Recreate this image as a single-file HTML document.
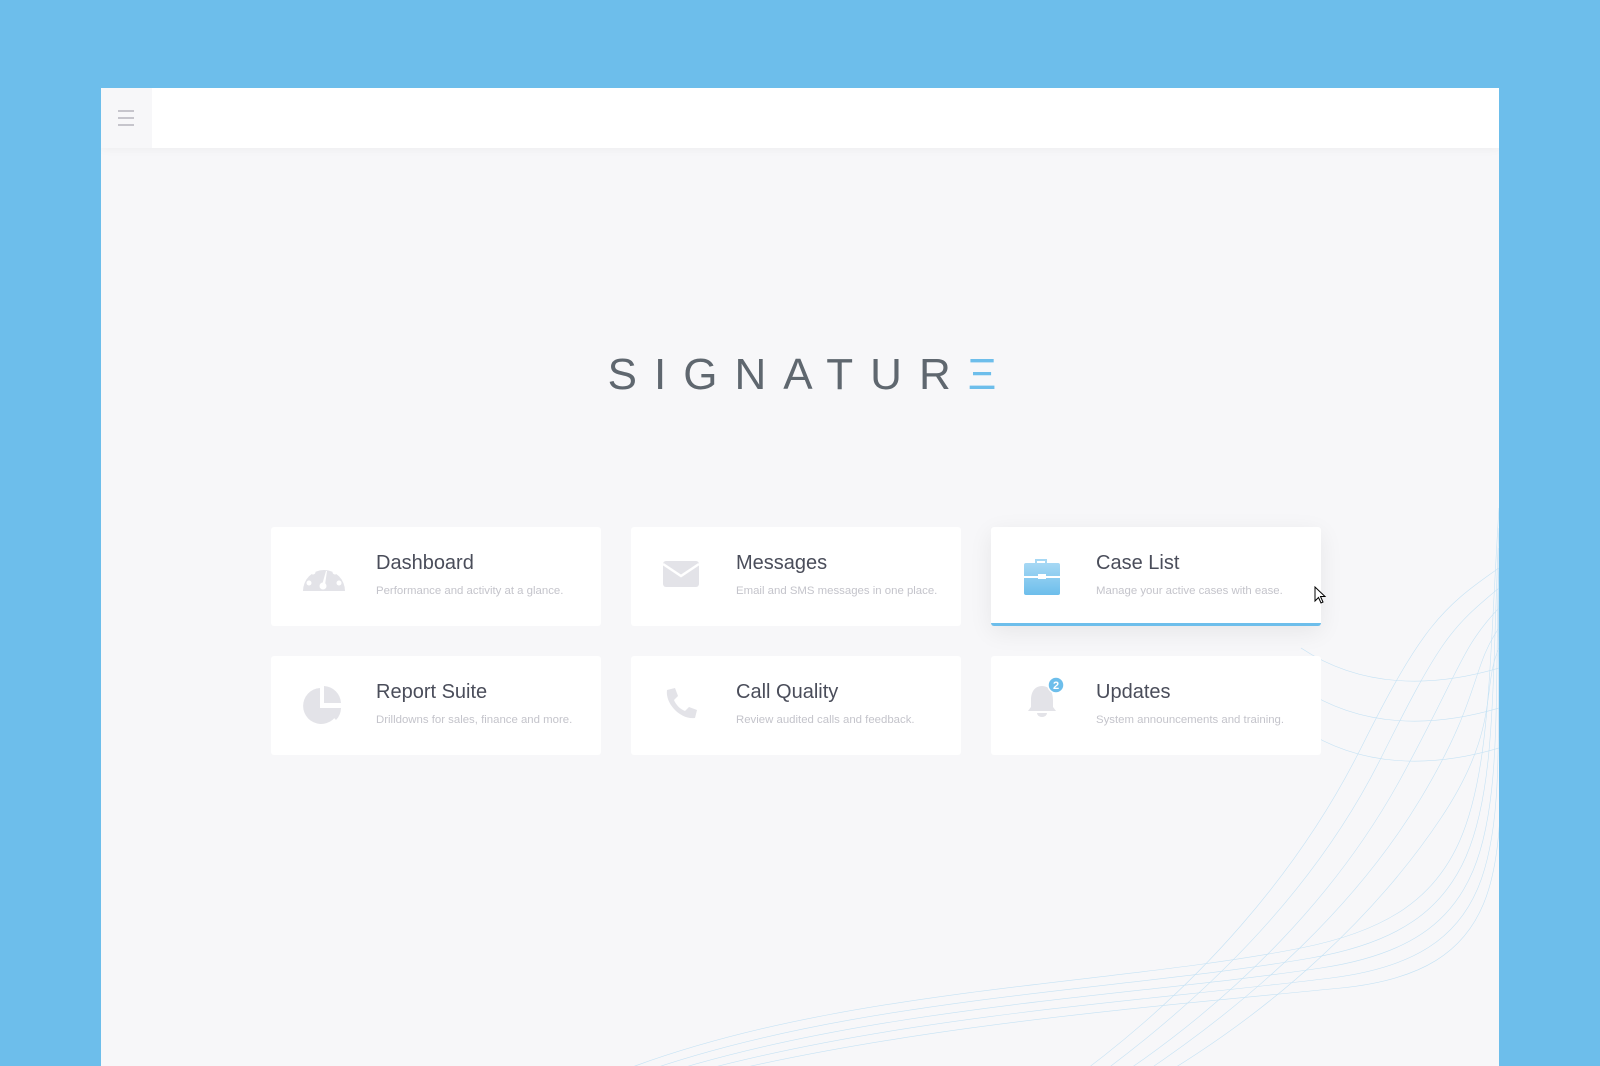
<!DOCTYPE html>
<html><head><meta charset="utf-8"><style>
*{margin:0;padding:0;box-sizing:border-box}
html,body{width:1600px;height:1066px;overflow:hidden}
body{background:#6dbeeb;font-family:"Liberation Sans",sans-serif;position:relative}
.win{position:absolute;left:101px;top:88px;width:1398px;height:1000px;background:#f7f7f9;overflow:hidden}
.hdr{position:absolute;left:0;top:0;width:100%;height:60px;background:#fff;box-shadow:0 2px 8px rgba(0,0,0,.04)}
.side{position:absolute;left:0;top:0;width:51px;height:60px;background:#f7f7f9}
.hb{position:absolute;left:17px;width:16px;height:2px;background:#c6c5cc}
.logo{position:absolute;left:0;width:100%;top:262px;text-align:center;font-size:44px;letter-spacing:17px;color:#5f676f;padding-left:21px}
.card{position:absolute;width:330px;height:99px;background:#fff;border-radius:3px}
.card .t{position:absolute;left:105px;top:25px;font-size:20px;color:#4a4d5a}
.card .s{position:absolute;left:105px;top:58px;font-size:11.4px;color:#c4c4cb}
.card svg{position:absolute;left:30px;top:28px}
.act{box-shadow:0 6px 24px rgba(0,0,0,.07);border-bottom:3px solid #6dbeeb}
</style></head><body>
<div class="win">
<svg style="position:absolute;left:0;top:0" width="1398" height="1000">
<g fill="none" stroke="#b9ddf3" stroke-width="0.6" opacity="0.8">
<path d="M480 1000 C700 900 1000 900 1200 860 S1380 700 1398 420"/>
<path d="M500 1000 C720 910 1010 905 1210 870 S1385 710 1398 440"/>
<path d="M520 1000 C740 920 1020 910 1220 880 S1390 720 1398 460"/>
<path d="M540 1000 C760 930 1030 915 1230 890 S1392 730 1398 480"/>
<path d="M560 1000 C780 940 1040 920 1240 900 S1394 740 1398 500"/>
<path d="M960 1000 C1100 900 1200 780 1260 660 S1340 520 1398 480"/>
<path d="M980 1000 C1120 900 1220 790 1280 670 S1350 540 1398 500"/>
<path d="M1000 1000 C1140 910 1240 800 1300 690 S1360 560 1398 520"/>
<path d="M1020 1000 C1160 910 1260 810 1320 710 S1370 580 1398 540"/>
<path d="M1040 1000 C1180 920 1280 820 1340 730 S1380 600 1398 560"/>
<path d="M1200 560 C1260 600 1330 600 1398 580"/>
<path d="M1200 600 C1260 640 1330 640 1398 620"/>
<path d="M1200 640 C1260 680 1330 680 1398 660"/>
</g></svg>
<div class="hdr"><div class="side">
<div class="hb" style="top:22px"></div><div class="hb" style="top:29px"></div><div class="hb" style="top:36px"></div></div></div>
<div class="logo">SIGNATUR<span style="color:#6dbeeb">Ξ</span></div>

<div class="card" style="left:170px;top:439px">
<svg width="46" height="40" viewBox="0 0 46 40"><path d="M2 36 A21 21 0 1 1 44 36 Z" fill="#e3e3e8"/><g fill="#fff"><circle cx="8" cy="28" r="2.5"/><circle cx="12" cy="17" r="2.5"/><circle cx="23" cy="11" r="2.5"/><circle cx="34" cy="17" r="2.5"/><circle cx="38" cy="28" r="2.5"/><circle cx="22" cy="31" r="3.5"/><path d="M21 30 L25 16 L26 16 L24 30Z"/></g></svg>
<div class="t">Dashboard</div><div class="s">Performance and activity at a glance.</div></div>

<div class="card" style="left:530px;top:439px">
<svg width="40" height="36" viewBox="0 0 40 36"><rect x="2" y="6" width="36" height="26" rx="3" fill="#e3e3e8"/><path d="M2 9 L20 21 L38 9" stroke="#fff" stroke-width="2.5" fill="none"/></svg>
<div class="t">Messages</div><div class="s">Email and SMS messages in one place.</div></div>

<div class="card act" style="left:890px;top:439px;height:99px">
<svg width="40" height="40" viewBox="0 0 40 40"><defs><linearGradient id="g" x1="0" y1="0" x2="0" y2="1"><stop offset="0" stop-color="#a6d8f4"/><stop offset="1" stop-color="#6dbeeb"/></linearGradient></defs><path d="M14 8 V4 H26 V8 H24 V6 H16 V8Z" fill="#a6d8f4"/><rect x="3" y="8" width="36" height="32" rx="2" fill="url(#g)"/><rect x="3" y="21" width="36" height="2" fill="#fff"/><rect x="17" y="19" width="8" height="5" fill="#fff"/></svg>
<div class="t">Case List</div><div class="s">Manage your active cases with ease.</div></div>

<div class="card" style="left:170px;top:568px">
<svg width="44" height="44" viewBox="0 0 44 44"><path d="M19 4 A18 18 0 1 0 38 24 L19 24Z" fill="#e3e3e8"/><path d="M23 2 A18 18 0 0 1 40 19 L23 19Z" fill="#e3e3e8"/><path d="M24 24 L40 24 A18 18 0 0 1 35 36Z" fill="#e3e3e8"/></svg>
<div class="t">Report Suite</div><div class="s">Drilldowns for sales, finance and more.</div></div>

<div class="card" style="left:530px;top:568px">
<svg width="40" height="40" viewBox="0 0 40 40"><path d="M6 6 L14 4 L17 12 L13 16 C15 21 19 25 24 27 L28 23 L36 26 L34 34 C20 36 4 20 6 6Z" fill="#e3e3e8"/></svg>
<div class="t">Call Quality</div><div class="s">Review audited calls and feedback.</div></div>

<div class="card" style="left:890px;top:568px">
<svg width="50" height="46" viewBox="0 0 50 46" style="top:20px"><path d="M21 10 C13 10 10 17 10 24 L10 31 L7 35 L35 35 L32 31 L32 24 C32 17 29 10 21 10Z" fill="#e3e3e8"/><path d="M16 37 A5 4 0 0 0 26 37Z" fill="#e3e3e8"/><circle cx="35" cy="9" r="8" fill="#6dbeeb" stroke="#fff" stroke-width="1.5"/><text x="35" y="13" font-size="11" fill="#fff" text-anchor="middle" font-family="Liberation Sans" font-weight="bold">2</text></svg>
<div class="t">Updates</div><div class="s">System announcements and training.</div></div>

<svg style="position:absolute;left:1213px;top:498px" width="14" height="20" viewBox="0 0 14 20"><path d="M1 1 L1 15 L4.5 11.5 L7 17 L9 16 L6.5 10.5 L11 10.5Z" fill="#fff" stroke="#000" stroke-width="1"/></svg>
</div>
</body></html>
